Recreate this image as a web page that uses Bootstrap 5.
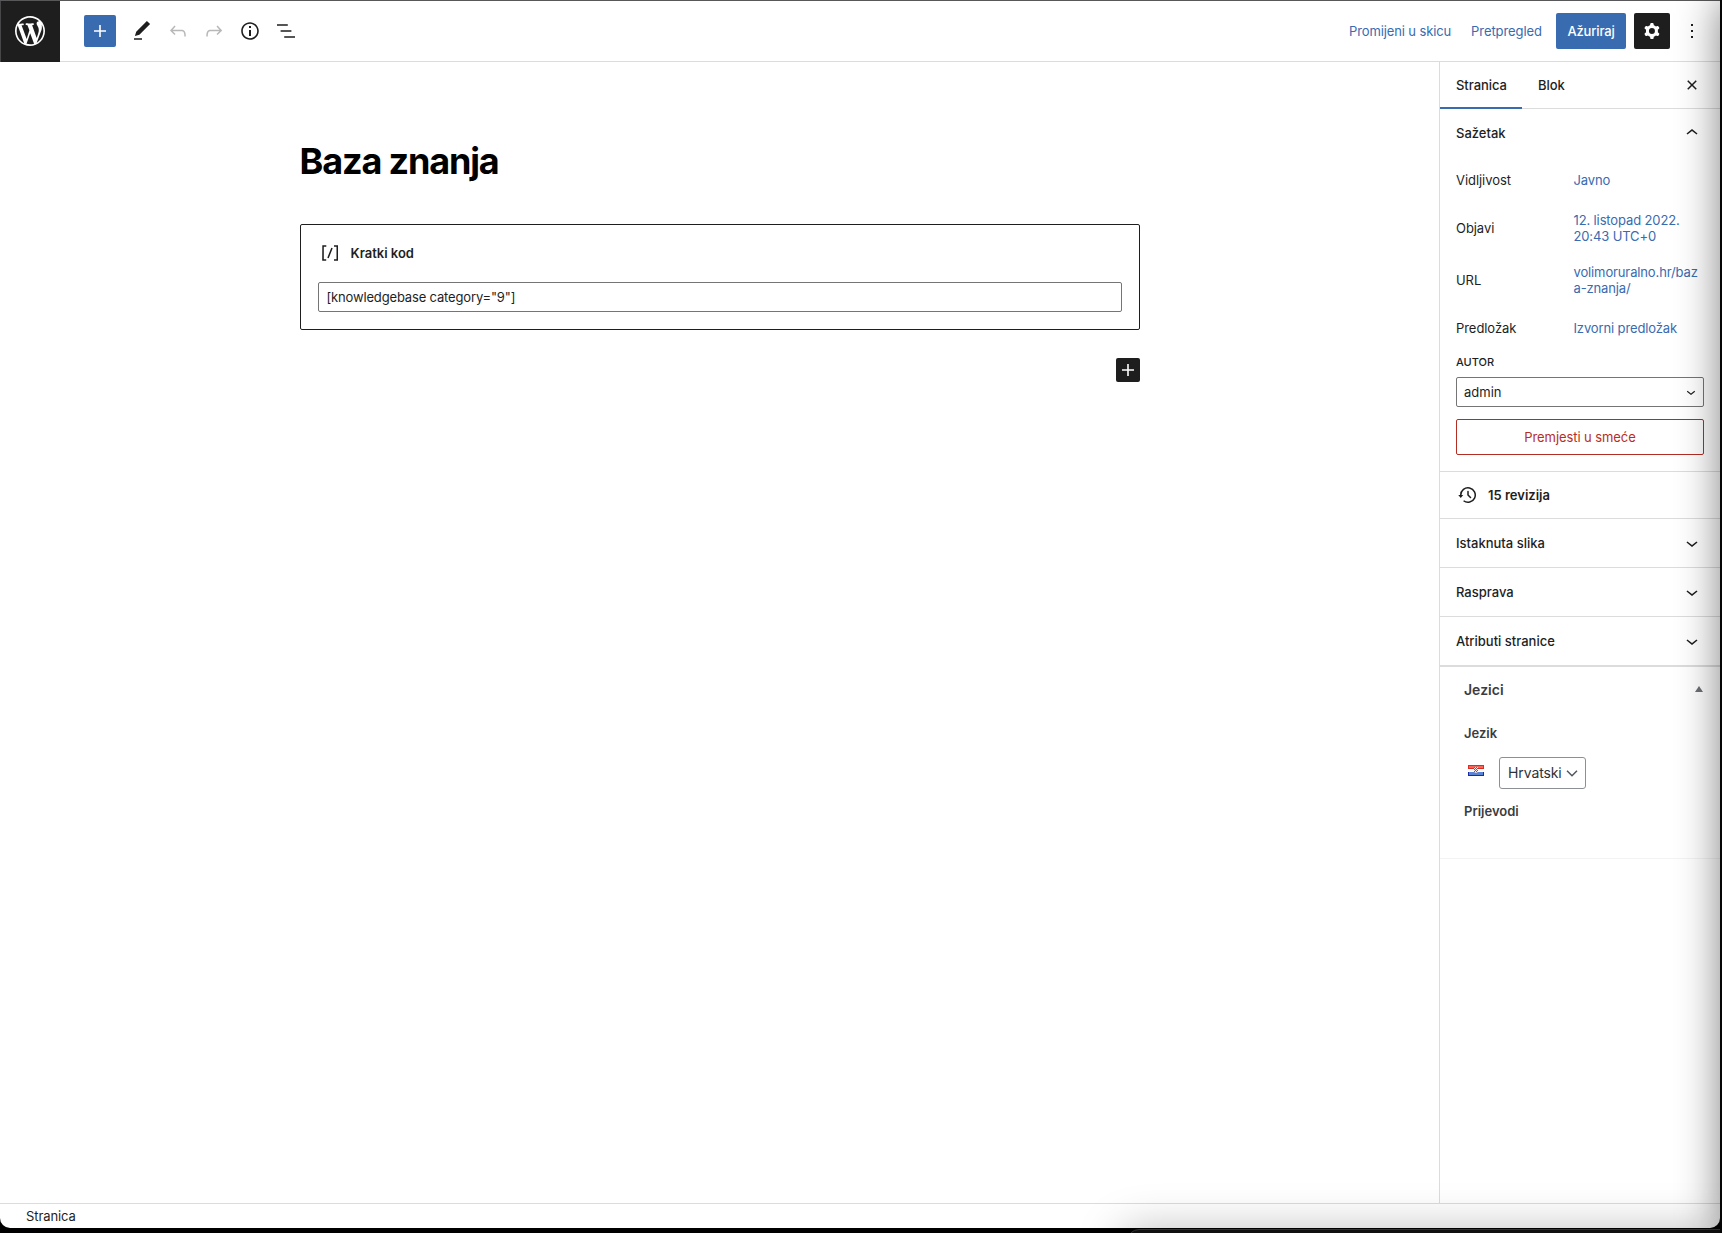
<!DOCTYPE html>
<html lang="hr">
<head>
<meta charset="utf-8">
<title>Uredi stranicu</title>
<link rel="stylesheet" href="https://cdn.jsdelivr.net/npm/bootstrap@5.3.0/dist/css/bootstrap.min.css">
<style>
:root{--wp-blue:#386bb0;--wp-ink:#1e1e1e;--wp-line:#dcdcdc}
html,body{height:100%}
body{background:#000;overflow:hidden;font:13px/1.2 Inter,"Open Sans",sans-serif;color:var(--wp-ink)}
svg{display:block;flex:none;fill:currentColor}
.screen{width:1722px;height:1233px;overflow:hidden}
.editor{width:1720px;height:1228px;background:#fff;border-top:1px solid #58585a;border-radius:0 0 10px 10px}
.topbar{height:61px;border-bottom:1px solid var(--wp-line)}
.wp-home{width:60px;height:61px;background:var(--wp-ink);color:#fff;border-left:1px solid #47474a;padding-right:1px}
.tools{margin-left:24px;gap:12px}
.btn{--bs-btn-font-size:13px;--bs-btn-line-height:1.2;--bs-btn-border-radius:2px;--bs-btn-padding-x:0;--bs-btn-padding-y:0;border:0;display:flex;align-items:center;justify-content:center}
.tool{width:24px;height:32px;color:var(--wp-ink)}
.tool:disabled{opacity:1;color:#b8b8b8;border:0}
.tool-add{width:32px;color:#fff;background:var(--wp-blue);margin-right:2px}
.linkish{color:var(--wp-blue);height:36px;padding-top:2px;letter-spacing:-.07px}
.draft{margin-right:20px;letter-spacing:-.12px}
.preview{margin-right:14px}
.more{margin:0 16px 0 10px}
.btn-update{width:70px;height:36px;padding-top:2px;background:var(--wp-blue);color:#fff;font-weight:500;letter-spacing:-.15px}
.btn-cog{width:36px;height:36px;background:var(--wp-ink);color:#fff}
.canvas{padding-top:77px}
.content{width:840px;margin:0 auto}
.page-title{font-size:36px;font-weight:700;line-height:44px;color:#000;letter-spacing:-1.15px;margin:0 0 41px}
.shortcode{height:106px;border:1px solid var(--wp-ink);border-radius:2px;padding:16px 17px}
.shortcode-label{height:24px;gap:9px;font-weight:600;margin-bottom:17px}
.shortcode-label span{padding-top:2px}
.form-control{height:30px;border:1px solid #757575;border-radius:2px;font-size:13px;line-height:29px;padding:0 8px;color:var(--wp-ink);letter-spacing:-.16px}
.appender{width:24px;height:24px;background:var(--wp-ink);color:#fff;margin:28px 0 0 auto}
.side{width:281px;border-left:1px solid var(--wp-line)}
.side-tabs{height:47px;border-bottom:1px solid var(--wp-line)}
.side-tabs .nav-link{height:47px;padding:0 15px 1px 16px;color:var(--wp-ink);font-weight:500;line-height:47px;border-radius:0;letter-spacing:-.05px}
.side-tabs .nav-link.active{box-shadow:inset 0 -2px 0 var(--wp-blue);width:82px}
.side-icon{margin-right:16px}
.panel-head{height:48px;padding:0 16px;font-weight:500}
.panel-head span{padding-top:2px}
.panel-head.tall{height:49px}
.panel-head.rev{height:47px}
.summary-row{height:48px;padding-left:16px}
.summary-row.first{height:40px}
.summary-row.dated{height:56px}
.summary-row dt{width:117.5px;font-weight:400;letter-spacing:-.06px}
.summary-row dd{width:130px;margin:0;padding-bottom:3px;line-height:16px;color:var(--wp-blue);letter-spacing:-.13px}
.author{padding:2px 16px 16px}
.author label{display:block;font-size:11px;font-weight:500;line-height:14px;margin-bottom:8px}
.pick{border:1px solid #757575;border-radius:2px;height:30px;padding:0 3px 0 7px}
.pick span{padding-top:1px}
.btn-trash{width:100%;height:36px;margin-top:12px;padding-top:1px;border:1px solid #b32d23;color:#b92d24;letter-spacing:-.08px}
.panel-rule{border-top:1px solid var(--wp-line)}
.metabox{border-top:2px solid var(--wp-line);border-bottom:1px solid #f3f3f3;height:194px;padding:13px 17px 0 24px;color:#3c3c3f;font-weight:600}
.metabox h2{font-size:14px;line-height:20px;font-weight:600;margin:0}
.metabox .toggle{margin-bottom:2px}
.box-label{line-height:18px}
.lang-row{margin-top:15px;margin-bottom:13px;padding-left:4px}
.flag{margin:-5px 15px 0 0}
.lang-pick{height:32px;width:87px;border:1px solid #8c8f94;border-radius:3px;color:#2c3338;font-size:14px;font-weight:400;padding:0 7px 0 8px;letter-spacing:-.1px}
.foot{height:25px;border-top:1px solid var(--wp-line);padding:2px 0 0 26px;letter-spacing:-.1px}
.edge-right{position:absolute;left:1720px;top:0;width:100px;height:1233px;background:#050505;box-shadow:0 0 42px 1px rgba(0,0,0,.48)}
.edge-bottom{position:absolute;left:1127px;top:1229px;width:700px;height:80px;border:1px solid #333;border-radius:12px;background:#101010}
.glow{position:absolute;left:0;top:0;width:1720px;height:1228px;border-radius:0 0 10px 10px;overflow:hidden;pointer-events:none}
.glow i{position:absolute;left:1122px;top:1231px;width:900px;height:200px;border-radius:12px;box-shadow:0 0 46px rgba(0,0,0,.28)}
</style>
<script src="https://cdn.jsdelivr.net/npm/bootstrap@5.3.0/dist/js/bootstrap.bundle.min.js"></script>
</head>
<body>
<div class="screen position-relative">
<div class="editor d-flex flex-column">
  <header class="topbar d-flex align-items-center flex-shrink-0">
    <a class="wp-home d-flex align-items-center justify-content-center" href="#" aria-label="WordPress"><svg width="36" height="36" viewBox="-2 -2 24 24"><path d="M20 10c0-5.51-4.49-10-10-10C4.48 0 0 4.49 0 10c0 5.52 4.48 10 10 10 5.51 0 10-4.48 10-10zM7.78 15.37L4.37 6.22c.55-.02 1.17-.08 1.17-.08.5-.06.44-1.13-.06-1.11 0 0-1.45.11-2.37.11-.18 0-.37 0-.58-.01C4.12 2.69 6.87 1.11 10 1.11c2.33 0 4.45.87 6.05 2.34-.68-.11-1.65.39-1.65 1.58 0 .74.45 1.36.9 2.1.35.61.55 1.36.55 2.46 0 1.49-1.4 5-1.4 5l-3.03-8.37c.54-.02.82-.17.82-.17.5-.05.44-1.25-.06-1.22 0 0-1.44.12-2.38.12-.87 0-2.33-.12-2.33-.12-.5-.03-.56 1.2-.06 1.22l.92.08 1.26 3.41zM17.41 10c.24-.64.74-1.87.43-4.25.7 1.29 1.05 2.71 1.05 4.25 0 3.29-1.73 6.24-4.4 7.78.97-2.59 1.94-5.2 2.92-7.78zM6.1 18.09C3.12 16.65 1.11 13.53 1.11 10c0-1.3.23-2.48.72-3.59C3.25 10.3 4.67 14.2 6.1 18.09zm4.03-6.63l2.58 6.98c-.86.29-1.76.45-2.71.45-.79 0-1.57-.11-2.29-.33.81-2.38 1.62-4.74 2.42-7.1z"/></svg></a>
    <div class="tools d-flex align-items-center">
      <button class="btn tool tool-add" aria-label="Dodaj"><svg width="24" height="24" viewBox="0 0 24 24"><path d="M18 11.2h-5.2V6h-1.6v5.2H6v1.6h5.2V18h1.6v-5.2H18z"/></svg></button>
      <button class="btn tool" aria-label="Alati"><svg width="24" height="24" viewBox="0 0 24 24"><path d="M20.1 5.1L16.9 2 6.2 12.7l-1.3 4.4 4.5-1.3L20.1 5.1zM4 20.8h8v-1.5H4v1.5z"/></svg></button>
      <button class="btn tool" disabled aria-label="Poništi"><svg width="24" height="24" viewBox="0 0 24 24"><path d="M18.3 11.7c-.6-.6-1.4-.9-2.3-.9H6.7l2.9-3.3-1.1-1-4.5 5L8.5 16l1-1-2.7-2.7H16c.5 0 .9.2 1.3.5 1 1 1 3.4 1 4.5v.3h1.5v-.2c0-1.5 0-4.3-1.5-5.7z"/></svg></button>
      <button class="btn tool" disabled aria-label="Ponovi"><svg width="24" height="24" viewBox="0 0 24 24"><path d="M15.6 6.5l-1.1 1 2.9 3.3H8c-.9 0-1.7.3-2.3.9-1.4 1.5-1.4 4.2-1.4 5.6v.2h1.5v-.3c0-1.1 0-3.5 1-4.5.3-.3.7-.5 1.3-.5h9.2L14.5 15l1.1 1.1 4.6-4.6-4.6-5z"/></svg></button>
      <button class="btn tool" aria-label="Detalji"><svg width="24" height="24" viewBox="0 0 24 24"><path d="M12 3.2c-4.8 0-8.8 3.9-8.8 8.8 0 4.8 3.9 8.8 8.8 8.8 4.8 0 8.8-3.9 8.8-8.8 0-4.8-4-8.8-8.8-8.8zm0 16c-4 0-7.2-3.3-7.2-7.2C4.8 8 8 4.8 12 4.8s7.2 3.3 7.2 7.2c0 4-3.2 7.2-7.2 7.2zM11 17h2v-6h-2v6zm0-8h2V7h-2v2z"/></svg></button>
      <button class="btn tool" aria-label="Popis"><svg width="24" height="24" viewBox="0 0 24 24"><path d="M13.8 5.2H3v1.5h10.8V5.2zm-3.6 12v1.5H21v-1.5H10.2zm7.2-6H6.6v1.5h10.8v-1.5z"/></svg></button>
    </div>
    <div class="d-flex align-items-center ms-auto">
      <button class="btn linkish draft">Promijeni u skicu</button>
      <button class="btn linkish preview">Pretpregled</button>
      <button class="btn btn-update me-2">Ažuriraj</button>
      <button class="btn btn-cog" aria-label="Postavke"><svg width="24" height="24" viewBox="0 0 24 24"><path fill-rule="evenodd" d="M10.289 4.836A1 1 0 0111.275 4h1.306a1 1 0 01.987.836l.244 1.466c.787.26 1.503.679 2.108 1.218l1.393-.522a1 1 0 011.216.437l.653 1.13a1 1 0 01-.23 1.273l-1.148.944a6.025 6.025 0 010 2.435l1.149.946a1 1 0 01.23 1.272l-.653 1.13a1 1 0 01-1.216.437l-1.394-.522c-.605.54-1.32.958-2.108 1.218l-.244 1.466a1 1 0 01-.987.836h-1.306a1 1 0 01-.986-.836l-.244-1.466a5.995 5.995 0 01-2.108-1.218l-1.394.522a1 1 0 01-1.217-.436l-.653-1.131a1 1 0 01.23-1.272l1.149-.946a6.026 6.026 0 010-2.435l-1.148-.944a1 1 0 01-.23-1.272l.653-1.131a1 1 0 011.217-.437l1.393.522a5.994 5.994 0 012.108-1.218l.244-1.466zM14.929 12a3 3 0 11-6 0 3 3 0 016 0z"/></svg></button>
      <button class="btn tool more" aria-label="Opcije"><svg width="24" height="24" viewBox="0 0 24 24"><path d="M13 19h-2v-2h2v2zm0-6h-2v-2h2v2zm0-6h-2V5h2v2z"/></svg></button>
    </div>
  </header>
  <div class="d-flex flex-grow-1">
    <main class="canvas flex-grow-1">
      <div class="content">
        <h1 class="page-title">Baza znanja</h1>
        <section class="shortcode">
          <div class="shortcode-label d-flex align-items-center"><svg width="24" height="24" viewBox="0 0 24 24"><path d="M16 4.2v1.5h2.5v12.5H16v1.5h4V4.2h-4zM4.2 19.8h4v-1.5H5.8V5.8h2.5V4.2h-4l-.1 15.6zm5.1-3.1l1.4.6 4-10-1.4-.6-4 10z"/></svg><span>Kratki kod</span></div>
          <div class="form-control">[knowledgebase category="9"]</div>
        </section>
        <button class="btn appender" aria-label="Dodaj blok"><svg width="24" height="24" viewBox="0 0 24 24"><path d="M18 11.2h-5.2V6h-1.6v5.2H6v1.6h5.2V18h1.6v-5.2H18z"/></svg></button>
      </div>
    </main>
    <aside class="side flex-shrink-0">
      <div class="side-tabs nav align-items-center flex-nowrap">
        <a class="nav-link active" href="#">Stranica</a>
        <a class="nav-link" href="#">Blok</a>
        <svg class="ms-auto side-icon" width="24" height="24" viewBox="0 0 24 24"><path d="M12 13.06l3.712 3.713 1.061-1.06L13.061 12l3.712-3.712-1.06-1.06L12 10.938 8.288 7.227l-1.061 1.06L10.939 12l-3.712 3.712 1.06 1.061L12 13.061z"/></svg>
      </div>
      <div class="panel-head d-flex align-items-center justify-content-between"><span>Sažetak</span><svg width="24" height="24" viewBox="0 0 24 24"><path d="M6.5 12.4L12 8l5.5 4.4-.9 1.2L12 10l-4.5 3.6-1-1.2z"/></svg></div>
      <dl class="m-0 pt-1">
        <div class="summary-row first d-flex align-items-center"><dt>Vidljivost</dt><dd>Javno</dd></div>
        <div class="summary-row dated d-flex align-items-center"><dt>Objavi</dt><dd>12. listopad 2022.<br>20:43 UTC+0</dd></div>
        <div class="summary-row d-flex align-items-center"><dt>URL</dt><dd>volimoruralno.hr/baz<br>a-znanja/</dd></div>
        <div class="summary-row d-flex align-items-center"><dt>Predložak</dt><dd>Izvorni predložak</dd></div>
      </dl>
      <div class="author">
        <label>AUTOR</label>
        <div class="pick d-flex align-items-center justify-content-between"><span>admin</span><svg width="18" height="18" viewBox="0 0 24 24"><path d="M17.5 11.6L12 16l-5.5-4.4.9-1.2L12 14l4.5-3.6 1 1.2z"/></svg></div>
        <button class="btn btn-trash">Premjesti u smeće</button>
      </div>
      <div class="panel-rule panel-head rev d-flex align-items-center"><svg width="24" height="24" viewBox="0 0 24 24"><path d="M5.5 12h1.75l-2.5 3-2.5-3H4a8 8 0 113.134 6.35l.907-1.194A6.5 6.5 0 105.5 12zm9.53 1.97l-2.28-2.28V8.5a.75.75 0 00-1.5 0V12a.747.747 0 00.218.529l1.282-.84-1.28.842 2.5 2.5a.75.75 0 101.06-1.061z"/></svg><span class="ms-2 fw-semibold">15 revizija</span></div>
      <div class="panel-rule panel-head tall d-flex align-items-center justify-content-between"><span>Istaknuta slika</span><svg width="24" height="24" viewBox="0 0 24 24"><path d="M17.5 11.6L12 16l-5.5-4.4.9-1.2L12 14l4.5-3.6 1 1.2z"/></svg></div>
      <div class="panel-rule panel-head tall d-flex align-items-center justify-content-between"><span>Rasprava</span><svg width="24" height="24" viewBox="0 0 24 24"><path d="M17.5 11.6L12 16l-5.5-4.4.9-1.2L12 14l4.5-3.6 1 1.2z"/></svg></div>
      <div class="panel-rule panel-head tall d-flex align-items-center justify-content-between"><span>Atributi stranice</span><svg width="24" height="24" viewBox="0 0 24 24"><path d="M17.5 11.6L12 16l-5.5-4.4.9-1.2L12 14l4.5-3.6 1 1.2z"/></svg></div>
      <section class="metabox">
        <div class="d-flex justify-content-between align-items-center"><h2>Jezici</h2><svg class="toggle" width="8" height="6" viewBox="0 0 8 6"><path d="M4 0l4 6H0z" fill="#6d7075"/></svg></div>
        <div class="mt-4 box-label">Jezik</div>
        <div class="d-flex align-items-center lang-row">
          <svg class="flag" width="16" height="11" viewBox="0 0 16 11"><path fill="#e22a20" d="M0 0h16v4H0z"/><path fill="#f2665c" d="M1 1h14v2H1z"/><path fill="#fff" d="M0 4h16v3H0z"/><path fill="#1c2aa8" d="M0 7h16v4H0z"/><path fill="#5a83d6" d="M1 7h14v3H1z"/><path fill="#fbe5e3" d="M6 2h4v5L8 8 6 7z"/><path fill="#e0352b" d="M6 2h1v1H6zM8 2h1v1H8zM7 3h1v1H7zM9 3h1v1H9zM6 4h1v1H6zM8 4h1v1H8zM7 5h1v1H7zM9 5h1v1H9zM6 6h1v1H6zM8 6h1v1H8z"/></svg>
          <div class="lang-pick d-flex align-items-center justify-content-between"><span>Hrvatski</span><svg width="12" height="12" viewBox="0 0 12 12" stroke="#50575e" stroke-width="1.5"><path fill="none" d="M1 3.8l5 5 5-5"/></svg></div>
        </div>
        <div class="box-label">Prijevodi</div>
      </section>
    </aside>
  </div>
  <footer class="foot d-flex align-items-center flex-shrink-0">Stranica</footer>
</div>
<div class="glow"><i></i></div>
<div class="edge-bottom"></div>
<div class="edge-right"></div>
</div>
</body>
</html>
